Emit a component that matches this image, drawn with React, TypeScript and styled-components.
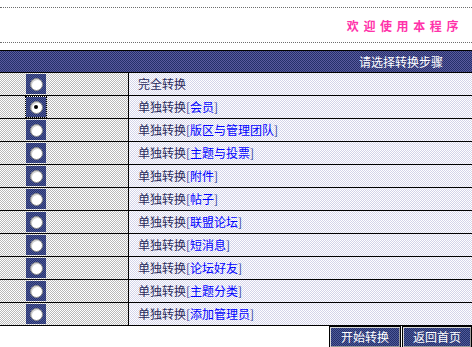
import React, { useState } from 'react';
import styled, { createGlobalStyle, css } from 'styled-components';

const GlobalStyle = createGlobalStyle`
  html, body {
    margin: 0;
    padding: 0;
    background: #ffffff;
    font-family: "Noto Sans CJK SC", "Noto Sans", sans-serif;
    font-size: 12px;
  }
`;

// 1px dither helpers, the old page used tiled gif backgrounds
const dither = (a: string, b: string) => css`
  background-color: ${a};
  background-image: repeating-conic-gradient(${a} 0 25%, ${b} 0 50%);
  background-size: 2px 2px;
`;

const steps = ['会员', '版区与管理团队', '主题与投票', '附件', '帖子', '联盟论坛', '短消息', '论坛好友', '主题分类', '添加管理员'];

function App() {
  const [selected, setSelected] = useState(1);

  return (
    <Page>
      <GlobalStyle />
      <Banner>
        <Welcome>欢迎使用本程序</Welcome>
      </Banner>
      <StepTable>
        <HeaderBar>请选择转换步骤</HeaderBar>
        <Row>
          <RadioCell>
            <RadioBox focused={selected === 0} onClick={() => setSelected(0)}>
              <RadioDot checked={selected === 0} />
            </RadioBox>
          </RadioCell>
          <LabelCell>完全转换</LabelCell>
        </Row>
        {steps.map((step, i) => (
          <Row key={step}>
            <RadioCell>
              <RadioBox focused={selected === i + 1} onClick={() => setSelected(i + 1)}>
                <RadioDot checked={selected === i + 1} />
              </RadioBox>
            </RadioCell>
            <LabelCell>
              单独转换<Bracket>[</Bracket>
              <StepLink href="#">{step}</StepLink>
              <Bracket>]</Bracket>
            </LabelCell>
          </Row>
        ))}
      </StepTable>
      <ButtonBar>
        <NavButton width={72}>开始转换</NavButton>
        <NavButton width={70}>返回首页</NavButton>
      </ButtonBar>
    </Page>
  );
}

const Page = styled.div`
  width: 472px;
  height: 347px;
  overflow: hidden;
  padding-top: 7px;
  box-sizing: border-box;
`;

const Banner = styled.div`
  height: 34px;
  border-top: 1px dotted #6e6e6e;
  border-bottom: 1px dotted #6e6e6e;
  display: flex;
  align-items: center;
  justify-content: flex-end;
  padding-right: 9px;
`;

const Welcome = styled.div`
  color: #ff33aa;
  font-weight: bold;
  font-size: 12px;
  letter-spacing: 4.6px;
  line-height: 14px;
  padding-top: 2px;
`;

const StepTable = styled.div`
  margin-top: 7px;
`;

const HeaderBar = styled.div`
  ${dither('#24306a', '#5a5a9e')}
  height: 21px;
  border-top: 1px solid #000;
  border-bottom: 1px solid #000;
  display: flex;
  align-items: center;
  justify-content: flex-end;
  padding-right: 29px;
  color: #ffffff;
  line-height: 14px;
`;

const Row = styled.div`
  display: grid;
  grid-template-columns: 129px 1fr;
  height: 22px;
  border-bottom: 1px solid #000;
`;

const RadioCell = styled.div`
  ${dither('#ffffff', '#b8b8b8')}
  border-right: 1px solid #000;
  display: flex;
  align-items: center;
  padding-left: 26px;
`;

const RadioBox = styled.div<{ focused: boolean }>`
  ${dither('#24306a', '#4e5a9a')}
  width: 20px;
  height: 20px;
  box-sizing: border-box;
  display: flex;
  align-items: center;
  justify-content: center;
  cursor: pointer;
  outline: ${({ focused }) => (focused ? '1px dotted #000' : 'none')};
  outline-offset: 0;
`;

const RadioDot = styled.span<{ checked: boolean }>`
  width: 11px;
  height: 11px;
  border-radius: 50%;
  background: #ffffff;
  border: 1px solid #8a8a8a;
  box-shadow: inset 1px 1px 0 #cfcfcf;
  position: relative;

  &::after {
    content: '';
    display: ${({ checked }) => (checked ? 'block' : 'none')};
    position: absolute;
    left: 3.5px;
    top: 3.5px;
    width: 4px;
    height: 4px;
    border-radius: 50%;
    background: #000;
  }
`;

const LabelCell = styled.div`
  ${dither('#ffffff', '#d4d4ea')}
  display: flex;
  align-items: center;
  padding-left: 9px;
  color: #2a2a5c;
  line-height: 14px;
  white-space: nowrap;
`;

const Bracket = styled.span`
  color: #3a4aa0;
`;

const StepLink = styled.a`
  color: #0000ff;
  text-decoration: none;
`;

const ButtonBar = styled.div`
  display: flex;
  justify-content: flex-end;
  gap: 1px;
`;

const NavButton = styled.button<{ width: number }>`
  ${dither('#24306a', '#4e5a9a')}
  width: ${({ width }) => width}px;
  height: 22px;
  margin: 0;
  padding: 0;
  border: 1px solid #000;
  box-shadow: inset 1px 1px 0 #d8d8d8, inset -1px -1px 0 #9a9a9a;
  color: #ffffff;
  font-family: "Noto Sans CJK SC", "Noto Sans", sans-serif;
  font-size: 12px;
  line-height: 14px;
  cursor: pointer;
`;

export default App;
